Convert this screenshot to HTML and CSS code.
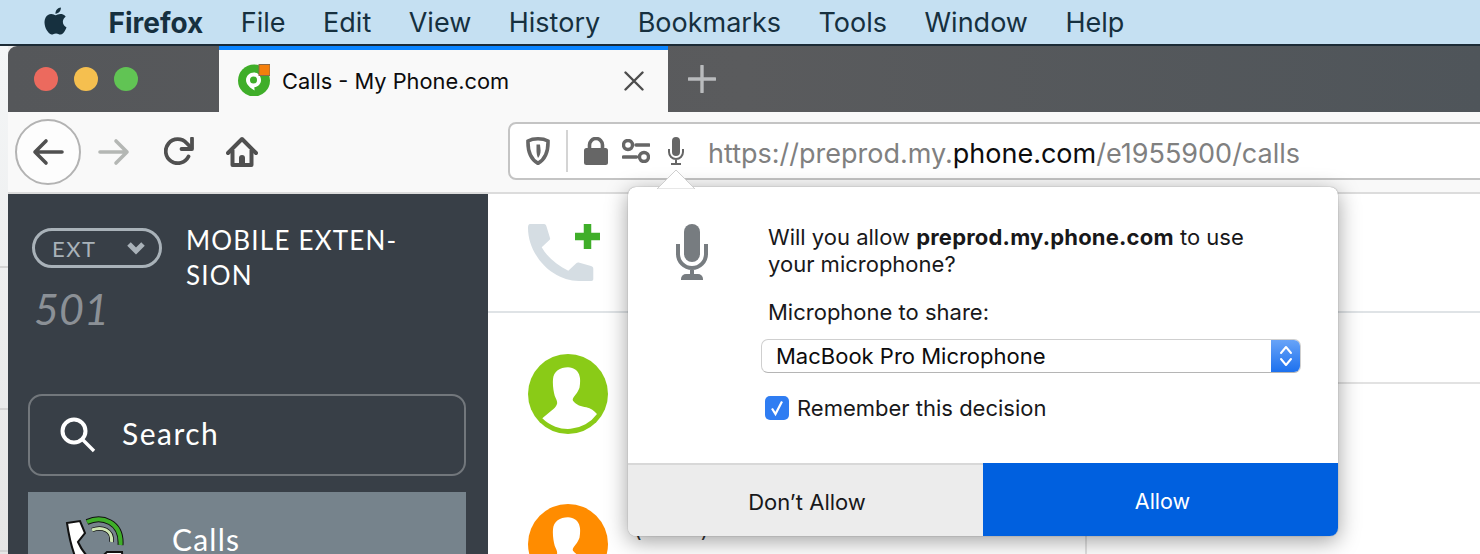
FILE: index.html
```html
<!DOCTYPE html>
<html lang="en">
<head>
<meta charset="utf-8">
<title>Calls - My Phone.com</title>
<link rel="stylesheet" href="styles.css">
</head>
<body>
<header class="menubar">
  <svg class="apple" viewBox="0 0 24 24"><path d="M12.152 6.896c-.948 0-2.415-1.078-3.96-1.04-2.04.027-3.91 1.183-4.961 3.014-2.117 3.675-.546 9.103 1.519 12.09 1.013 1.454 2.208 3.09 3.792 3.039 1.52-.065 2.09-.987 3.935-.987 1.831 0 2.35.987 3.96.948 1.637-.026 2.676-1.48 3.676-2.948 1.156-1.688 1.636-3.325 1.662-3.415-.039-.013-3.182-1.221-3.22-4.857-.026-3.04 2.48-4.494 2.597-4.559-1.429-2.09-3.623-2.324-4.39-2.376-2-.156-3.675 1.09-4.61 1.09zM15.53 3.83c.843-1.012 1.4-2.427 1.245-3.83-1.207.052-2.662.805-3.532 1.818-.78.896-1.454 2.338-1.273 3.714 1.338.104 2.715-.688 3.559-1.701"/></svg>
  <span class="menu-app">Firefox</span>
  <span>File</span><span>Edit</span><span>View</span><span>History</span><span>Bookmarks</span><span>Tools</span><span>Window</span><span>Help</span>
</header>

<div class="desk">
  <div class="desk-edge"><i></i><i></i><i></i></div>
  <div class="window">
    <div class="tabbar">
      <div class="lights"><b class="red"></b><b class="yellow"></b><b class="green"></b></div>
      <div class="tab">
        <svg class="favicon" viewBox="0 0 32 32">
          <circle cx="16" cy="17" r="16" fill="#3fae29"/>
          <path d="M16 9c-4.400 0-8 3.400-8 7.600 0 4.400 4.600 8.400 8.600 10.400l-.3-3.200c3.800-.4 6.700-3.400 6.700-7.200C23 12.400 20 9 16 9z" fill="#fff"/>
          <circle cx="15.500" cy="16.500" r="3.500" fill="#3fae29"/>
          <rect x="21" y="1" width="11" height="11" fill="#f47f0c" stroke="#8a6a4a" stroke-width="1"/>
        </svg>
        <span class="tab-title">Calls - My Phone.com</span>
        <svg class="tab-close" viewBox="0 0 20 20"><path d="M1.500 1.500l17 17M18.500 1.500l-17 17" stroke="#4d4d4d" stroke-width="2.400" stroke-linecap="round"/></svg>
      </div>
      <svg class="newtab" viewBox="0 0 28 28"><path d="M14 1v26M1 14h26" stroke="#b9bbbd" stroke-width="3.400" stroke-linecap="round"/></svg>
    </div>

    <div class="toolbar">
      <div class="back">
        <svg viewBox="0 0 32 28" class="ic-arrow"><path d="M30 14H3M14 3L3 14l11 11" fill="none" stroke="#505050" stroke-width="3.600" stroke-linecap="round" stroke-linejoin="round"/></svg>
      </div>
      <svg viewBox="0 0 32 28" class="ic-arrow fwd"><path d="M2 14h27M18 3l11 11-11 11" fill="none" stroke="#b4b7b4" stroke-width="3.600" stroke-linecap="round" stroke-linejoin="round"/></svg>
      <svg viewBox="0 0 30 28" class="ic-reload"><path d="M24.500 19.500A12 12 0 1 1 22.500 6L26.500 10" fill="none" stroke="#505050" stroke-width="3.800" stroke-linecap="round"/><path d="M28 1.500V12H17.500" fill="none" stroke="#505050" stroke-width="3.800" stroke-linecap="round" stroke-linejoin="round"/></svg>
      <svg viewBox="0 0 32 32" class="ic-home"><path d="M2 17L16 3l14 14" fill="none" stroke="#505050" stroke-width="4" stroke-linecap="round" stroke-linejoin="round"/><path d="M6.500 14v15h19V14" fill="none" stroke="#505050" stroke-width="4" stroke-linejoin="round"/><path d="M13 30v-8a3 3 0 0 1 6 0v8z" fill="#505050"/></svg>

      <div class="urlbar">
        <svg viewBox="0 0 24 28" class="ic-shield"><path d="M12 1.800c4 0 7.500.8 10 2.200.3 9.500-2 17.800-10 22.400C4 21.800 1.700 13.500 2 4c2.500-1.400 6-2.200 10-2.200z" fill="none" stroke="#666" stroke-width="3.600"/><path d="M10.500 7.500h3.500l.6 6c0 3-1 5.500-2.600 7.500-1-2-1.500-5-1.500-7.500z" fill="#666"/></svg>
        <i class="url-sep"></i>
        <svg viewBox="0 0 24 28" class="ic-lock"><path d="M5.500 12V8a6.500 6.500 0 0 1 13 0v4" fill="none" stroke="#666" stroke-width="3.600"/><rect x="0" y="11" width="24" height="17" rx="2.500" fill="#666"/></svg>
        <svg viewBox="0 0 28 24" class="ic-perm"><circle cx="6" cy="6" r="4.500" fill="none" stroke="#666" stroke-width="3.400"/><path d="M14 6h13M1.500 18h13" stroke="#666" stroke-width="3.600" stroke-linecap="round"/><circle cx="22" cy="18" r="4.500" fill="none" stroke="#666" stroke-width="3.400"/></svg>
        <svg viewBox="0 0 16 28" class="ic-mic"><rect x="4" y="0" width="8" height="19" rx="4" fill="#666"/><path d="M1 12v3a7 7 0 0 0 14 0v-3M8 22v4M3 27h10" fill="none" stroke="#666" stroke-width="2"/></svg>
        <span class="url"><span class="url-dim">https://preprod.my.</span>phone.com<span class="url-dim">/e1955900/calls</span></span>
      </div>
    </div>

    <div class="content">
      <aside class="sidebar">
        <div class="ext-head">
          <div class="ext-left">
            <div class="ext-pill"><span>EXT</span>
              <svg viewBox="0 0 20 14"><path d="M3 3l7 7 7-7" fill="none" stroke="#a9b2b9" stroke-width="5"/></svg>
            </div>
            <div class="ext-num">501</div>
          </div>
          <div class="ext-name">MOBILE EXTEN-<br>SION</div>
        </div>
        <div class="search">
          <svg viewBox="0 0 36 36"><circle cx="14" cy="14" r="11.500" fill="none" stroke="#fff" stroke-width="4"/><path d="M22.500 22.500L34 34" stroke="#fff" stroke-width="3.400"/></svg>
          <span>Search</span>
        </div>
        <div class="nav-item">
          <svg viewBox="0 0 60 60">
            <path d="M3 7l13-2 5 12-7 9c4 9 10 16 17 21l12-11h15l2 24H22C12 48 6 28 3 7z" fill="#fff" stroke="#111" stroke-width="2"/>
            <path d="M23 6C38-1 58 6 56.500 29" fill="none" stroke="#111" stroke-width="6"/>
            <path d="M23 6C38-1 58 6 56.500 29" fill="none" stroke="#3fae29" stroke-width="4"/>
            <path d="M28 14c10-4 21 0 19.500 12" fill="none" stroke="#111" stroke-width="4.500"/>
            <path d="M28 14c10-4 21 0 19.500 12" fill="none" stroke="#cfe6b4" stroke-width="3"/>
          </svg>
          <span>Calls</span>
        </div>
      </aside>
      <main class="main">
        <div class="main-head">
          <svg viewBox="0 0 74 62">
            <path d="M3 1h14c1.500 0 2 1 2.500 2.500L23 15c.3 1 0 1.500-.8 2.200l-7.500 7.100C20 34 30 42 41.300 47.700L49 40.500c1-1 2-1.200 3.500-.8L64 43c1.500.4 2.300 1.300 2.300 3v10c0 1.300-.7 2-2 2H52C25 58 1 32 1 5c0-2.500.7-4 2-4z" fill="#d5dde3"/>
            <path d="M60.500 1v25M48 13.500h25" stroke="#3fae29" stroke-width="7.500"/>
          </svg>
        </div>
        <div class="list">
          <div class="avatars">
            <svg viewBox="0 0 80 80"><circle cx="40" cy="40" r="40" fill="#8acb17"/><path class="person" d="M40 13.300c-8 0-14.500 4-15 12-.5 6 .5 12 1.700 16.400 1 3 3 5 2.300 8.300-1 3-3 5-5.700 6.700l-9 7.600A36 36 0 0 0 69 60c-3-3-6-6-10.700-6.700-5-1-10-2-13.300-6.600-1-2 1-4 2.500-6 2-2 3-5 4-7 .8-5 .8-9 .2-11-1-6-6-9.400-11.700-9.400z"/></svg>
            <svg viewBox="0 0 80 80"><circle cx="40" cy="40" r="40" fill="#ff8c00"/><path class="person" d="M40 13.300c-8 0-14.500 4-15 12-.5 6 .5 12 1.700 16.400 1 3 3 5 2.300 8.300-1 3-3 5-5.700 6.700l-9 7.600A36 36 0 0 0 69 60c-3-3-6-6-10.700-6.700-5-1-10-2-13.300-6.600-1-2 1-4 2.500-6 2-2 3-5 4-7 .8-5 .8-9 .2-11-1-6-6-9.400-11.700-9.400z"/></svg>
          </div>
          <div class="details">
            <div class="detail-top"></div>
            <div class="detail-row">
              <span class="phone-num">(&nbsp;&nbsp;&nbsp;&nbsp;&nbsp;&nbsp;&nbsp;&nbsp;&nbsp;&nbsp;)</span>
              <div class="detail-col"></div>
            </div>
          </div>
        </div>
      </main>
    </div>
  </div>
</div>

<div class="popup">
  <svg class="popup-arrow" viewBox="0 0 38 20"><path d="M0 20L19 1l19 19z" fill="#fff" stroke="#cfcfcf" stroke-width="1"/></svg>
  <div class="popup-body">
    <svg class="popup-mic" viewBox="0 0 32 56"><rect x="8" y="0" width="16" height="38" rx="8" fill="#777c80"/><path d="M2 20v10a14 14 0 0 0 28 0V20M16 44v7" fill="none" stroke="#777c80" stroke-width="4"/><path d="M5 56v-1a5 5 0 0 1 5-5h12a5 5 0 0 1 5 5v1z" fill="#777c80"/></svg>
    <div class="popup-main">
      <p class="popup-q">Will you allow <strong>preprod.my.phone.com</strong> to use your microphone?</p>
      <p class="popup-label">Microphone to share:</p>
      <div class="select"><span>MacBook Pro Microphone</span>
        <div class="stepper"><svg viewBox="0 0 14 24"><path d="M2 9l5-6 5 6M2 15l5 6 5-6" fill="none" stroke="#fff" stroke-width="2" stroke-linecap="round" stroke-linejoin="round"/></svg></div>
      </div>
      <div class="remember">
        <div class="checkbox"><svg viewBox="0 0 24 24"><path d="M7 12.500l3.500 5.500L17 5.500" fill="none" stroke="#fff" stroke-width="2.200"/></svg></div>
        <span>Remember this decision</span>
      </div>
    </div>
  </div>
  <div class="popup-actions">
    <div class="btn btn-deny">Don’t Allow</div>
    <div class="btn btn-allow">Allow</div>
  </div>
</div>
</body>
</html>
```

FILE: styles.css
```css
* { box-sizing: border-box; }
html, body { margin: 0; padding: 0; }
body {
  width: 1480px;
  height: 554px;
  overflow: hidden;
  position: relative;
  font-family: Inter, "Liberation Sans", sans-serif;
  background: #fff;
  display: flex;
  flex-direction: column;
}

/* macOS menu bar */
.menubar {
  height: 46px;
  flex: none;
  background: #c5e0f2;
  border-bottom: 2px solid #1c2b36;
  display: flex;
  align-items: center;
  gap: 37.500px;
  padding: 1px 0 0 42px;
  font-size: 27px;
  color: #16303f;
}
.apple { width: 27px; height: 32px; fill: #16303f; margin-right: 2px; margin-top: -4px; }
.menu-app { font-weight: 700; font-size: 28px; }

.desk { flex: 1; display: flex; min-height: 0; background: #ececec; }
.desk-edge {
  width: 8px;
  flex: none;
  background: linear-gradient(#f4f6f7, #e6e6e6);
  display: flex;
  flex-direction: column;
  padding-top: 220px;
  gap: 140px;
}
.desk-edge i { display: block; height: 2px; background: #d4d4d4; }
.window {
  flex: 1;
  min-width: 0;
  display: flex;
  flex-direction: column;
  border-top-left-radius: 9px;
  overflow: hidden;
}

/* tabs */
.tabbar {
  height: 66px;
  flex: none;
  display: flex;
  align-items: stretch;
  background: linear-gradient(90deg, #55575a, #5a5b5d 50%, #4f555a);
}
.lights { width: 211px; display: flex; align-items: center; gap: 16px; padding: 0 0 0 26px; }
.lights b { width: 24px; height: 24px; border-radius: 50%; display: block; }
.red { background: #ec6a5e; }
.yellow { background: #f5bf4f; }
.green { background: #61c454; }
.tab {
  width: 449px;
  background: #f9f9f9;
  border-top: 4px solid #0a84ff;
  display: flex;
  align-items: center;
  padding: 0 24px 0 19px;
}
.favicon { width: 32px; height: 33px; flex: none; margin-top: -3px; }
.tab-title { font-size: 21.800px; color: #0c0c0d; margin-left: 12px; flex: 1; white-space: nowrap; }
.tab-close { width: 20px; height: 20px; flex: none; }
.newtab { width: 28px; height: 28px; align-self: center; margin-left: 20px; }

/* toolbar */
.toolbar {
  height: 82px;
  flex: none;
  background: #f9f9f9;
  border-bottom: 2px solid #dcdcdc;
  display: flex;
  align-items: center;
  padding-left: 7px;
}
.back {
  width: 66px;
  height: 66px;
  flex: none;
  border-radius: 50%;
  border: 2px solid #b3b3b3;
  background: #fdfdfd;
  display: flex;
  align-items: center;
  justify-content: center;
}
.ic-arrow { width: 32px; height: 28px; flex: none; }
.back .ic-arrow { margin-left: -1px; }
.fwd { margin-left: 17px; }
.ic-reload { width: 30px; height: 28px; flex: none; margin-left: 34px; margin-top: -2px; }
.ic-home { width: 32px; height: 32px; flex: none; margin-left: 32px; }
.urlbar {
  flex: 1;
  height: 58px;
  margin: -3px -20px 0 250px;
  background: #fff;
  border: 2px solid #c4c4c4;
  border-radius: 8px;
  display: flex;
  align-items: center;
  padding-left: 16px;
}
.ic-shield { width: 24px; height: 28px; flex: none; }
.url-sep { width: 2px; height: 42px; background: #d4d4d4; margin: 0 16px; flex: none; }
.ic-lock { width: 24px; height: 28px; flex: none; }
.ic-perm { width: 28px; height: 24px; flex: none; margin-left: 14px; }
.ic-mic { width: 16px; height: 28px; flex: none; margin-left: 18px; }
.url { font-size: 27px; margin: 5px 0 0 24px; color: #0c0c0d; white-space: nowrap; }
.url-dim { color: #808080; }

/* page */
.content { flex: 1; min-height: 0; display: flex; background: #fff; }
.sidebar {
  width: 480px;
  flex: none;
  background: #383f47;
  padding: 34px 22px 0 20px;
  overflow: hidden;
}
.ext-head { display: flex; height: 166px; align-items: flex-start; padding-left: 4px; }
.ext-left { width: 154px; flex: none; }
.ext-pill {
  width: 130px;
  height: 40px;
  border: 3px solid #a9b2b9;
  border-radius: 20px;
  display: flex;
  align-items: center;
  justify-content: space-between;
  padding: 0 13px 0 17px;
  font-family: Lato, sans-serif;
  font-size: 22px;
  letter-spacing: 1.500px;
  color: #a9b2b9;
}
.ext-pill svg { width: 20px; height: 14px; }
.ext-num { font-family: Lato, sans-serif; font-style: italic; font-size: 43px; line-height: 48px; color: #8b9096; margin: 17px 0 0 2px; }
.ext-name { font-family: Lato, sans-serif; font-size: 26px; letter-spacing: 1.200px; line-height: 35px; color: #fff; margin-top: -5px; white-space: nowrap; }
.search {
  height: 82px;
  border: 2px solid #72777c;
  border-radius: 14px;
  display: flex;
  align-items: center;
  padding-left: 30px;
  font-family: Lato, sans-serif;
  font-size: 30px;
  letter-spacing: 1.500px;
  color: #fff;
}
.search svg { width: 36px; height: 36px; margin-right: 26px; flex: none; }
.search span { margin-top: -4px; }
.nav-item {
  height: 90px;
  margin-top: 16px;
  background: #76838c;
  display: flex;
  align-items: flex-start;
  padding: 24px 0 0 36px;
  font-family: Lato, sans-serif;
  font-size: 30px;
  letter-spacing: 1.200px;
  color: #fff;
}
.nav-item svg { width: 60px; height: 60px; flex: none; margin-right: 48px; }
.nav-item span { margin-top: 5px; }

.main { flex: 1; min-width: 0; display: flex; flex-direction: column; background: #fff; }
.main-head { height: 119px; flex: none; border-bottom: 2px solid #dfe3e6; padding: 29px 0 0 39px; }
.main-head svg { width: 74px; height: 62px; display: block; }
.list { flex: 1; min-height: 0; display: flex; }
.avatars { width: 140px; flex: none; padding: 41px 0 0 40px; display: flex; flex-direction: column; gap: 70px; }
.avatars svg { width: 80px; height: 80px; flex: none; }
.person { fill: #fff; }
.details { flex: 1; display: flex; flex-direction: column; }
.detail-top { height: 71px; flex: none; border-bottom: 2px solid #e2e2e2; }
.detail-row { flex: 1; display: flex; min-height: 0; padding-left: 6px; }
.phone-num { width: 451px; flex: none; font-size: 21px; line-height: 26px; padding-top: 133px; color: #333; white-space: nowrap; }
.detail-col { flex: 1; border-left: 2px solid #e2e2e2; }

/* permission popup */
.popup {
  position: absolute;
  left: 628px;
  top: 187px;
  width: 710px;
  height: 349px;
  background: #fff;
  border-radius: 8px;
  box-shadow: 0 0 1px rgba(0,0,0,.5), 0 5px 22px rgba(0,0,0,.38);
  display: flex;
  flex-direction: column;
  color: #18181a;
}
.popup-arrow { position: absolute; left: 29px; top: -18px; width: 38px; height: 20px; }
.popup-body { flex: 1; display: flex; padding: 37px 0 0 48px; min-height: 0; }
.popup-mic { width: 32px; height: 56px; flex: none; }
.popup-main { margin-left: 60px; width: 533px; font-size: 22px; }
.popup-q { margin: 0; line-height: 27px; width: 490px; }
.popup-q strong { letter-spacing: .2px; }
.popup-label { margin: 21px 0 0; line-height: 27px; }
.select {
  margin: 13px 0 0 -7px;
  width: 540px;
  height: 34px;
  border: 1px solid #cfcfcf;
  border-bottom-color: #b5b5b5;
  border-radius: 7px;
  display: flex;
  align-items: center;
  justify-content: space-between;
  padding-left: 14px;
  color: #0c0c0d;
  overflow: hidden;
}
.stepper {
  width: 29px;
  height: 34px;
  background: linear-gradient(#6aa5f8, #1a6fee);
  display: flex;
  align-items: center;
  justify-content: center;
  flex: none;
}
.stepper svg { width: 14px; height: 24px; }
.remember { display: flex; align-items: center; margin: 22px 0 0 -3px; }
.checkbox { width: 24px; height: 24px; border-radius: 5px; background: #2f7df2; margin-right: 8px; flex: none; }
.checkbox svg { width: 24px; height: 24px; display: block; }
.popup-actions { height: 73px; flex: none; display: flex; }
.btn { flex: 1; display: flex; align-items: center; justify-content: center; font-size: 22px; padding-top: 2px; }
.btn-deny { background: #ececec; border-top: 2px solid #d8d8d8; border-bottom-left-radius: 8px; width: 355px; flex: none; padding-left: 3px; }
.btn-allow { background: #0060df; color: #fff; border-bottom-right-radius: 8px; padding-left: 4px; font-size: 21.500px; }
```
